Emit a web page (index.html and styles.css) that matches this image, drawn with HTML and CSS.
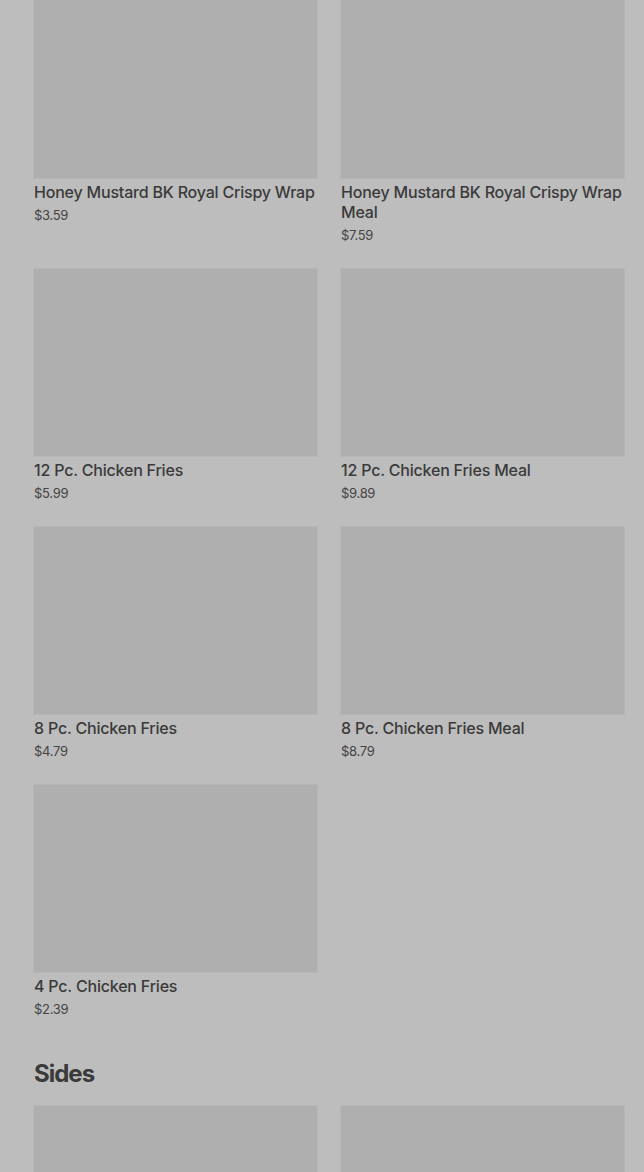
FILE: index.html
```html
<!DOCTYPE html>
<html lang="en">
<head>
<meta charset="utf-8">
<link rel="stylesheet" href="styles.css">
</head>
<body>
<main class="menu">
  <section class="section section-first">
    <div class="grid">
      <div class="card">
        <div class="thumb"></div>
        <div class="name">Honey Mustard BK Royal Crispy Wrap</div>
        <div class="price">$3.59</div>
      </div>
      <div class="card">
        <div class="thumb"></div>
        <div class="name">Honey Mustard BK Royal Crispy Wrap Meal</div>
        <div class="price">$7.59</div>
      </div>
      <div class="card">
        <div class="thumb"></div>
        <div class="name">12 Pc. Chicken Fries</div>
        <div class="price">$5.99</div>
      </div>
      <div class="card">
        <div class="thumb"></div>
        <div class="name">12 Pc. Chicken Fries Meal</div>
        <div class="price">$9.89</div>
      </div>
      <div class="card">
        <div class="thumb"></div>
        <div class="name">8 Pc. Chicken Fries</div>
        <div class="price">$4.79</div>
      </div>
      <div class="card">
        <div class="thumb"></div>
        <div class="name">8 Pc. Chicken Fries Meal</div>
        <div class="price">$8.79</div>
      </div>
      <div class="card">
        <div class="thumb"></div>
        <div class="name">4 Pc. Chicken Fries</div>
        <div class="price">$2.39</div>
      </div>
    </div>
  </section>
  <section class="section">
    <h2 class="section-title">Sides</h2>
    <div class="grid">
      <div class="card">
        <div class="thumb"></div>
      </div>
      <div class="card">
        <div class="thumb"></div>
      </div>
    </div>
  </section>
</main>
</body>
</html>
```

FILE: styles.css
```css
html, body {
  margin: 0;
  padding: 0;
  background: #bdbdbd;
  overflow: hidden;
}

body {
  font-family: Inter, Roboto, "Liberation Sans", sans-serif;
  color: #3b3b3b;
}

.menu {
  padding: 0 20px 0 34px;
  margin-top: -9px;
}

.grid {
  display: grid;
  grid-template-columns: 283px 283px;
  column-gap: 24px;
  row-gap: 24px;
}

.card {
  display: flex;
  flex-direction: column;
}

.thumb {
  height: 187px;
  background: #afafaf;
  box-shadow: 0 0 0 1px #b6b6b6;
}

.name {
  margin-top: 4px;
  font-size: 16px;
  line-height: 20px;
  font-weight: 500;
  letter-spacing: -0.2px;
  color: #3a3a3a;
}

.price {
  margin-top: 3px;
  font-size: 13px;
  line-height: 20px;
  color: #444;
  letter-spacing: -0.3px;
}

.section-title {
  margin: 39px 0 16px;
  font-size: 24px;
  line-height: 32px;
  font-weight: 700;
  color: #3a3a3a;
  letter-spacing: -1px;
}
```
